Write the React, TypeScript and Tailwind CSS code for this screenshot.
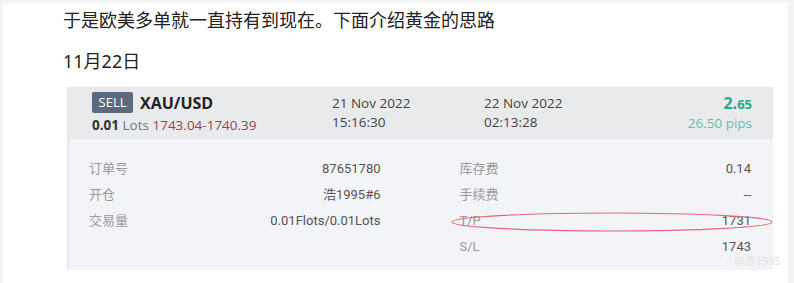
import React from 'react';

const cjk = "font-['Noto_Sans','Noto_Sans_CJK_SC',sans-serif]";

type Row = { label: string; value: string };

const leftRows: Row[] = [
  { label: '订单号', value: '87651780' },
  { label: '开仓', value: '浩1995#6' },
  { label: '交易量', value: '0.01Flots/0.01Lots' },
];

const rightRows: Row[] = [
  { label: '库存费', value: '0.14' },
  { label: '手续费', value: '--' },
  { label: 'T/P', value: '1731' },
  { label: 'S/L', value: '1743' },
];

const DetailColumn = ({ rows }: { rows: Row[] }) => (
  <div className="flex flex-col">
    {rows.map((r) => (
      <div key={r.label} className="flex h-[26px] items-center justify-between text-[13px]">
        <span className="text-[#9a9a9a]">{r.label}</span>
        <span className="text-[#555]">{r.value}</span>
      </div>
    ))}
  </div>
);

const App = () => {
  return (
    <div className="h-[283px] w-[794px] overflow-hidden bg-[#f3f3f3] pl-[3px] pt-[3px]">
      <div className="relative h-[280px] w-[785px] bg-white pl-[60px]">
        <p className={`${cjk} pt-[4px] text-[18px] leading-[27px] text-[#222]`}>
          于是欧美多单就一直持有到现在。下面介绍黄金的思路
        </p>
        <p className={`${cjk} mt-[14px] text-[18px] leading-[27px] text-[#222]`}>11月22日</p>

        <div className="ml-[4px] mt-[12px] w-[706px] font-['Open_Sans','Noto_Sans_CJK_SC',sans-serif]">
          {/* header */}
          <div className="flex h-[52px] items-center bg-[#e9eaec] pl-[25px] pr-[21px]">
            <div className="w-[240px]">
              <div className="flex items-center gap-[7px]">
                <span className="flex h-[21px] w-[41px] items-center justify-center rounded-[2px] bg-[#5b6a7e] text-[13px] text-white">
                  SELL
                </span>
                <span className="text-[16px] font-bold leading-[20px] text-[#222]">XAU/USD</span>
              </div>
              <div className="mt-[3px] text-[13.5px] leading-[18px]">
                <span className="font-bold text-[#333]">0.01</span>
                <span className="text-[#777]"> Lots </span>
                <span className="text-[#8c4a55]">1743.04-1740.39</span>
              </div>
            </div>
            <div className="w-[152px] text-[13.5px] leading-[19px] text-[#444]">
              <div>21 Nov 2022</div>
              <div>15:16:30</div>
            </div>
            <div className="text-[13.5px] leading-[19px] text-[#444]">
              <div>22 Nov 2022</div>
              <div>02:13:28</div>
            </div>
            <div className="ml-auto text-right leading-[19px]">
              <div className="font-bold text-[#27a887]">
                <span className="text-[16px]">2.</span>
                <span className="text-[13px]">65</span>
              </div>
              <div className="text-[13.5px] text-[#63c2ab]">26.50 pips</div>
            </div>
          </div>

          {/* body */}
          <div className="grid h-[131px] grid-cols-2 gap-x-[79px] border-l-2 border-[#e6e8ec] bg-[#f3f4f7] px-[20px] pr-[22px] pt-[17px] font-['Roboto','Noto_Sans_CJK_SC',sans-serif]">
            <DetailColumn rows={leftRows} />
            <DetailColumn rows={rightRows} />
          </div>
        </div>

        {/* hand-drawn mark around T/P */}
        <svg className="absolute left-[446px] top-[206px]" width="330" height="26" viewBox="0 0 330 26">
          <ellipse cx="163" cy="13" rx="160" ry="9" fill="none" stroke="#e06a78" strokeWidth="1.2" />
        </svg>

        {/* watermark */}
        <div className={`${cjk} absolute left-[723px] top-[250px] flex items-center gap-[2px] text-[11px]`}>
          <span className="text-[#e8e8e8]">◌</span>
          <span className="text-[#e2e2e2]">@浩1995</span>
        </div>
      </div>
    </div>
  );
};

export default App;
